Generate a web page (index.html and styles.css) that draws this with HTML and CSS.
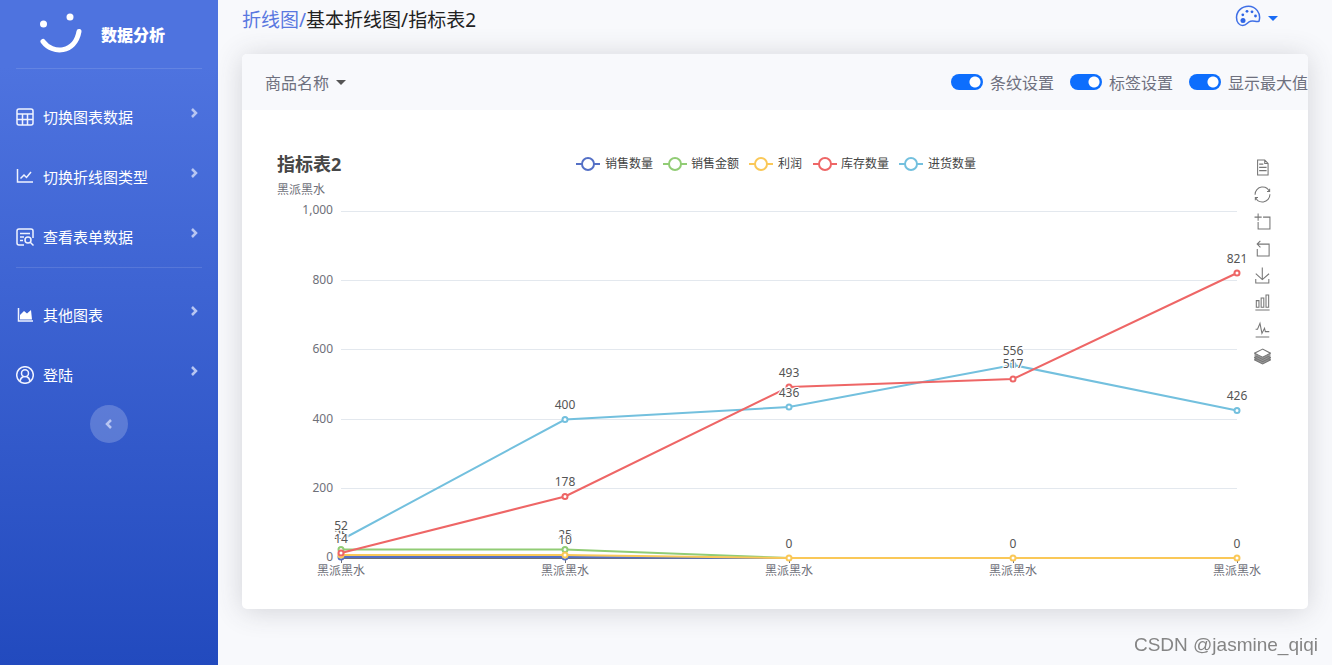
FILE: index.html
```html
<!DOCTYPE html>
<html lang="zh-CN">
<head>
<meta charset="utf-8">
<title>数据分析</title>
<link rel="stylesheet" href="styles.css">
</head>
<body>
<div class="layout">
  <aside class="sidebar">
    <div class="brand">
      <svg class="brand-logo" viewBox="0 0 44 42" aria-hidden="true">
        <circle cx="4.500" cy="11" r="3.500" fill="#fff"/><circle cx="31" cy="4" r="3.500" fill="#fff"/>
        <path d="M4 28.500C13.500 41.500 36 40.500 40 18.500" fill="none" stroke="#fff" stroke-width="5" stroke-linecap="round"/>
      </svg>
      <span class="brand-name">数据分析</span>
    </div>
    <nav>
      <ul class="menu">
        <li><a class="item" href="#">
          <svg class="icon" viewBox="0 0 18 18"><rect x="1" y="1" width="16" height="16" rx="2"/><path d="M1 6h16M1 11.500h16M6.500 6v11M11.500 6v11"/></svg>
          <span>切换图表数据</span><svg class="chevron" viewBox="0 0 8 12"><path d="M2 2l4 4-4 4"/></svg></a></li>
        <li><a class="item" href="#">
          <svg class="icon" viewBox="0 0 18 18"><path d="M1.500 1v13H17M4.500 10.500L8 7l2.500 2.500L15 4"/></svg>
          <span>切换折线图类型</span><svg class="chevron" viewBox="0 0 8 12"><path d="M2 2l4 4-4 4"/></svg></a></li>
        <li><a class="item" href="#">
          <svg class="icon" viewBox="0 0 18 18"><path d="M8 17H3a2 2 0 0 1-2-2V3a2 2 0 0 1 2-2h12a2 2 0 0 1 2 2v7M4 5.500h10M4 9h4M4 12.500h3"/><circle cx="12" cy="12" r="3"/><path d="M14 14l3.500 3.500"/></svg>
          <span>查看表单数据</span><svg class="chevron" viewBox="0 0 8 12"><path d="M2 2l4 4-4 4"/></svg></a></li>
      </ul>
      <ul class="menu">
        <li><a class="item" href="#">
          <svg class="icon" viewBox="0 0 18 18"><path d="M2.500 2v13H17"/><path d="M4 13.500V9l4-4 3 2.500L15 4l1 9.500z" fill="#fff" stroke="none"/></svg>
          <span>其他图表</span><svg class="chevron" viewBox="0 0 8 12"><path d="M2 2l4 4-4 4"/></svg></a></li>
        <li><a class="item" href="#">
          <svg class="icon" viewBox="0 0 18 18"><circle cx="9" cy="9" r="8.300"/><circle cx="9" cy="7.300" r="3.500"/><path d="M4 15c.5-2.500 2-4 3.500-4.300M14 15c-.5-2.500-2-4-3.500-4.300"/></svg>
          <span>登陆</span><svg class="chevron" viewBox="0 0 8 12"><path d="M2 2l4 4-4 4"/></svg></a></li>
      </ul>
    </nav>
    <button class="collapse" aria-label="收起侧栏"><svg class="collapse-icon" viewBox="0 0 8 12"><path d="M6 2L2 6l4 4"/></svg></button>
  </aside>

  <main class="main">
    <header class="topbar">
      <div class="crumbs"><a href="#">折线图/</a>基本折线图/指标表2</div>
      <button class="theme" aria-label="主题">
        <svg class="palette" viewBox="0 0 26 22"><path d="M24 16.200C26.500 8 20.500 1.200 13.500 1.200 6.500 1.200 1.500 6.500 1.500 12.500c0 5 3 8 6.200 8 4.300 0 4.500-3.500 7.800-4.300 3.500-.8 5.500.8 8.500 0z" fill="none" stroke="#3f6fe6" stroke-width="1.500"/><g fill="#2f66e6"><circle cx="8" cy="15.500" r="2.500"/><circle cx="7.800" cy="9.800" r="1.400"/><circle cx="12" cy="6.300" r="1.400"/><circle cx="17" cy="6.800" r="1.400"/><circle cx="20.500" cy="11" r="1.400"/></g></svg>
        <span class="caret"></span>
      </button>
    </header>

    <section class="card">
      <div class="card-head">
        <button class="dropdown">商品名称<span class="caret"></span></button>
        <div class="switches">
          <label class="switch"><input type="checkbox" role="switch" checked>条纹设置</label>
          <label class="switch"><input type="checkbox" role="switch" checked>标签设置</label>
          <label class="switch"><input type="checkbox" role="switch" checked>显示最大值</label>
        </div>
      </div>
      <div class="card-body">
        <svg class="chart" viewBox="242 110 1066 499" role="img" aria-label="指标表2">
          <text class="title" x="277" y="171">指标表2</text>
          <text class="axis" x="277" y="194">黑派黑水</text>
          <g class="legend">
            <g stroke="#5470c6"><path d="M576 164h24"/><circle cx="588" cy="164" r="6"/></g><text x="605" y="168">销售数量</text>
            <g stroke="#91cc75"><path d="M663 164h24"/><circle cx="675" cy="164" r="6"/></g><text x="691" y="168">销售金额</text>
            <g stroke="#fac858"><path d="M749 164h24"/><circle cx="761" cy="164" r="6"/></g><text x="778" y="168">利润</text>
            <g stroke="#ee6666"><path d="M813 164h24"/><circle cx="825" cy="164" r="6"/></g><text x="841" y="168">库存数量</text>
            <g stroke="#73c0de"><path d="M899 164h24"/><circle cx="911" cy="164" r="6"/></g><text x="928" y="168">进货数量</text>
          </g>
          <path class="grid" d="M341 211.500h896M341 280.500h896M341 349.500h896M341 419.500h896M341 488.500h896"/>
          <path class="baseline" d="M341 558.500h896M341.500 558v5M565.500 558v5M789.500 558v5M1013.500 558v5M1237.500 558v5"/>
          <g class="axis end">
            <text x="333" y="214">1,000</text><text x="333" y="284">800</text><text x="333" y="353">600</text>
            <text x="333" y="423">400</text><text x="333" y="492">200</text><text x="333" y="561">0</text>
          </g>
          <g class="axis middle">
            <text x="341" y="575">黑派黑水</text><text x="565" y="575">黑派黑水</text><text x="789" y="575">黑派黑水</text>
            <text x="1013" y="575">黑派黑水</text><text x="1237" y="575">黑派黑水</text>
          </g>
          <g class="series" stroke="#5470c6"><path d="M341 557L565 557L789 558H1237"/><circle cx="341" cy="557" r="2.500"/><circle cx="565" cy="557" r="2.500"/></g>
          <g class="series" stroke="#91cc75"><path d="M341 549.500H565L789 558H1237"/><circle cx="341" cy="549.500" r="2.500"/><circle cx="565" cy="549.500" r="2.500"/></g>
          <g class="series" stroke="#fac858"><path d="M341 555H565L789 558H1237"/><circle cx="341" cy="555" r="2.500"/><circle cx="565" cy="555" r="2.500"/><circle cx="789" cy="558" r="2.500"/><circle cx="1013" cy="558" r="2.500"/><circle cx="1237" cy="558" r="2.500"/></g>
          <g class="series" stroke="#73c0de"><path d="M341 540L565 419.500L789 407L1013 365L1237 410.500"/><circle cx="565" cy="419.500" r="2.500"/><circle cx="789" cy="407" r="2.500"/><circle cx="1013" cy="365" r="2.500"/><circle cx="1237" cy="410.500" r="2.500"/></g>
          <g class="series" stroke="#ee6666"><path d="M341 553L565 496.500L789 387L1013 379L1237 273"/><circle cx="341" cy="553" r="2.500"/><circle cx="565" cy="496.500" r="2.500"/><circle cx="789" cy="387" r="2.500"/><circle cx="1013" cy="379" r="2.500"/><circle cx="1237" cy="273" r="2.500"/></g>
          <g class="labels middle">
            <text x="341" y="539">25</text><text x="565" y="539">25</text>
            <text x="565" y="544">10</text><text x="789" y="548">0</text><text x="1013" y="548">0</text><text x="1237" y="548">0</text>
            <text x="341" y="543">14</text><text x="565" y="486">178</text><text x="789" y="377">493</text><text x="1013" y="368">517</text><text x="1237" y="263">821</text>
            <text x="341" y="530">52</text><text x="565" y="409">400</text><text x="789" y="397">436</text><text x="1013" y="355">556</text><text x="1237" y="400">426</text>
          </g>
        </svg>
        <div class="toolbox">
          <button aria-label="数据视图"><svg viewBox="-2 -2 64 64"><path d="M17.500,17.300H33M45.400,29.500h-28M11.500,2v56H51V14.800L38.400,2H11.500zM38.400,2.200v12.700H51M45.400,41.700h-28"/></svg></button>
          <button aria-label="刷新"><svg viewBox="-2 -2 64 64"><path d="M47,18.900h9.800V8.700M56.300,20.100C52.100,9,40.500,0.600,26.800,2.100C12.600,3.700,1.600,16.200,2.100,30.600M13,41.100H3.100v10.200M3.700,39.900c4.200,11.100,15.800,19.500,29.500,18c14.200-1.600,25.200-14.100,24.700-28.500"/></svg></button>
          <button aria-label="区域缩放"><svg viewBox="-2 -2 64 64"><path d="M0,13.500h26.900M13.500,26.900V0M32.100,13.500H58V58H13.500V32.100"/></svg></button>
          <button aria-label="缩放还原"><svg viewBox="-2 -2 64 64"><path d="M22,1.400L9.900,13.500l12.300,12.300M10.300,13.500H54.900v44.600H10.300v-26"/></svg></button>
          <button aria-label="保存为图片"><svg viewBox="-2 -2 64 64"><path d="M4.700,22.900L29.300,45.500L54.700,23.400M4.600,43.600V58H53.800V43.600M29.200,45.100V0"/></svg></button>
          <button aria-label="切换为柱状图"><svg viewBox="-2 -2 64 64"><path d="M6.700,22.900h10V48h-10zM24.900,13h10v35h-10zM43.200,2h10v46h-10zM3.100,58h53.700"/></svg></button>
          <button aria-label="切换为折线图"><svg viewBox="-2 -2 64 64"><path d="M4.100,28.900h7.100l9.300-22l7.400,38l9.700-19.700l3,12.800h14.900M4.100,58h51.400"/></svg></button>
          <button aria-label="切换为堆叠"><svg viewBox="-2 -2 64 64"><path d="M0 18v25l30 15 30-15V18L30 33z" fill="#999" stroke="none"/><path d="M8.200,38.400l-8.400,4.100l30.600,15.300L60,42.500l-8.100-4.100l-21.500,11L8.200,38.400zM51.900,30l-8.100,4.200l-13.400,6.900l-13.900-6.900L8.200,30l-8.400,4.200l8.400,4.200l22.200,11l21.500-11l8.100-4.200L51.900,30zM30.400,2.200L-0.200,17.500l8.400,4.100l8.300,4.200l8.400,4.200l5.500,2.700l5.300-2.700l8.100-4.200l8.100-4.200l8.100-4.100L30.400,2.200z"/></svg></button>
        </div>
      </div>
    </section>
  </main>
</div>
<div class="watermark">CSDN @jasmine_qiqi</div>
</body>
</html>
```
FILE: styles.css
```css
* { box-sizing: border-box; }
body {
  margin: 0;
  background: #f8f9fc;
  color: #222;
  font-family: "Noto Sans", "Noto Sans CJK SC", sans-serif;
  font-size: 16px;
}
button { padding: 0; border: 0; background: none; font: inherit; color: inherit; }
a { text-decoration: none; }
.layout { display: flex; min-height: 100vh; }

.sidebar {
  flex: 0 0 218px;
  display: flex;
  flex-direction: column;
  background: linear-gradient(180deg, #4e73df 10%, #224abe 100%);
  color: #fff;
}
.brand { display: flex; align-items: center; gap: 18px; height: 68px; padding-left: 39px; }
.brand-logo { width: 44px; height: 42px; }
.brand-name { font-size: 16px; font-weight: 800; }
.menu { margin: 0; padding: 0; list-style: none; }
.menu::before {
  content: "";
  display: block;
  height: 1px;
  margin: 0 16px 18px;
  background: rgba(255, 255, 255, 0.12);
}
.menu:last-child::before { margin-bottom: 17px; }
.item {
  display: flex;
  align-items: center;
  gap: 9px;
  height: 60px;
  padding: 20px 20px 20px 16px;
  color: #fff;
  font-size: 15px;
  line-height: 20px;
}
.icon { width: 18px; height: 18px; fill: none; stroke: #f0f3ff; stroke-width: 1.5; }
.chevron, .collapse-icon {
  width: 8px;
  height: 12px;
  fill: none;
  stroke: #b8c6f2;
  stroke-width: 2.5;
}
.chevron { margin-left: auto; align-self: flex-start; }
.collapse {
  display: grid;
  place-items: center;
  align-self: center;
  width: 38px;
  height: 38px;
  border-radius: 50%;
  background: rgba(255, 255, 255, 0.2);
}

.main { flex: 1; min-width: 0; padding: 0 24px; }
.topbar { display: flex; justify-content: space-between; height: 54px; padding-right: 30px; }
.crumbs { font-size: 19px; line-height: 40px; }
.crumbs a { color: #5a78e0; }
.theme { display: flex; align-items: center; gap: 7px; height: 32px; color: #1a6cf5; }
.palette { width: 26px; height: 22px; }
.caret {
  display: inline-block;
  border-top: 5px solid;
  border-left: 5px solid transparent;
  border-right: 5px solid transparent;
}
.theme .caret { margin-top: 4px; }

.card {
  overflow: hidden;
  border-radius: 5px;
  background: #fff;
  box-shadow: 0 2px 28px rgba(58, 59, 69, 0.2);
}
.card-head {
  display: flex;
  align-items: center;
  justify-content: space-between;
  height: 56px;
  padding-left: 23px;
  background: #f8f9fc;
  color: #6e707e;
}
.dropdown { display: flex; align-items: center; gap: 7px; }
.dropdown .caret { color: #555; }
.switches { display: flex; gap: 16px; }
.switch { display: flex; align-items: center; gap: 7px; white-space: nowrap; }
.switch input {
  appearance: none;
  width: 32px;
  height: 16px;
  margin: 0;
  border-radius: 8px;
  background: radial-gradient(circle at 24px 8px, #fff 5px, #0d6efd 6px);
}

.card-body { position: relative; }
.chart { display: block; width: 100%; height: auto; font-size: 12px; }
.title { font-size: 18px; font-weight: 700; fill: #464646; }
.axis { fill: #6e7079; }
.end { text-anchor: end; }
.middle { text-anchor: middle; }
.legend { fill: #444; }
.legend g { fill: #fff; stroke-width: 2; }
.grid { stroke: #e3e8ee; }
.baseline { stroke: #6e7079; }
.series { fill: #fff; stroke-width: 2; }
.series path { fill: none; }
.series circle { stroke-width: 2; }
.labels { fill: #555; stroke: #fff; stroke-width: 2; paint-order: stroke; font-size: 12px; }

.toolbox {
  position: absolute;
  top: 49px;
  right: 37px;
  display: flex;
  flex-direction: column;
  gap: 10px;
}
.toolbox button { width: 17px; height: 17px; }
.toolbox svg { display: block; fill: none; stroke: #777; stroke-width: 4; }

.watermark {
  position: fixed;
  right: 14px;
  bottom: 9px;
  color: #858585;
  font: 19px/22px "Liberation Sans", sans-serif;
}
```
